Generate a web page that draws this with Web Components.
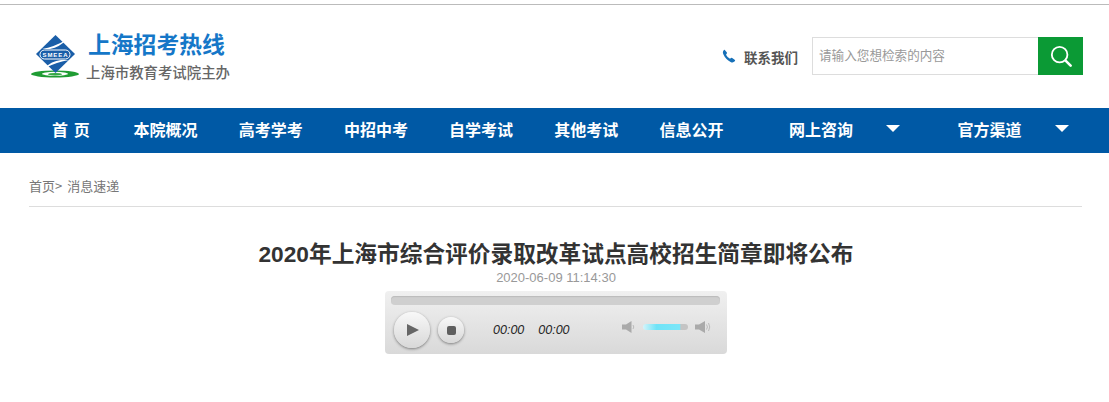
<!DOCTYPE html>
<html lang="zh">
<head>
<meta charset="utf-8">
<title>上海招考热线</title>
<style>
html, body { margin: 0; padding: 0; background: #fff; }
body { font-family: "Liberation Sans", "Noto Sans CJK SC", sans-serif; overflow: hidden; }
</style>
</head>
<body>
<site-header></site-header>
<main-nav>
    <nav-item>首 页</nav-item>
    <nav-item>本院概况</nav-item>
    <nav-item>高考学考</nav-item>
    <nav-item>中招中考</nav-item>
    <nav-item>自学考试</nav-item>
    <nav-item>其他考试</nav-item>
    <nav-item>信息公开</nav-item>
    <nav-item drop>网上咨询</nav-item>
    <nav-item drop>官方渠道</nav-item>
</main-nav>
<bread-crumb></bread-crumb>
<news-article>
    <span slot="title">2020年上海市综合评价录取改革试点高校招生简章即将公布</span>
    <span slot="date">2020-06-09 11:14:30</span>
    <audio-player></audio-player>
</news-article>

<script>
var h_template = document.createElement("template");
h_template.innerHTML = `
<style>
:host { display: block; box-sizing: border-box; border-top: 1px solid #bbb; margin-top: 4px; height: 104px; }
#wrap { display: flex; align-items: flex-start; padding: 0 26px 0 30px; }
#logo { display: flex; margin-top: 24px; }
#mark { width: 49px; height: 46px; margin-top: 4px; }
#names { margin-left: 9px; }
#name { font: bold 22.8px/28px "Liberation Sans", "Noto Sans CJK SC", sans-serif; color: #1577c8; margin-top: 2px; }
#sub { font: 500 14.4px/18px "Noto Sans CJK SC", sans-serif; color: #666; margin-top: 4px; margin-left: -2px; }
#right { margin-left: auto; display: flex; align-items: center; margin-top: 32px; }
#contact { display: flex; align-items: center; font: bold 13.5px/16px "Noto Sans CJK SC", sans-serif; color: #555; margin-right: 14px; margin-top: 1px; }
#contact svg { margin-right: 8px; margin-top: -2px; }
#search { display: flex; width: 271px; height: 38px; }
#field { flex: 1; box-sizing: border-box; border: 1px solid #ddd; border-right: none; font: 12.6px/34px "Noto Sans CJK SC", sans-serif; color: #999; padding-left: 6px; }
#btn { width: 45px; background: #0b9a35; display: flex; align-items: center; justify-content: center; }
</style>
<div id="wrap">
    <div id="logo">
        <svg id="mark" viewBox="0 0 49 46">
            <ellipse cx="25" cy="41" rx="24" ry="3.4" fill="#1f9c33"/>
            <ellipse cx="25" cy="40.8" rx="13" ry="2" fill="#fff"/>
            <ellipse cx="25" cy="41.2" rx="7" ry="1.3" fill="#35a845"/>
            <path d="M25.5 2 L45 21 L25.5 40 L6 21 Z" fill="#1a5ea8"/>
            <path d="M12 16 Q24 14 36 7 Q30 14 20 16" fill="#fff"/>
            <path d="M39 27 Q27 29 15 35 Q21 28 31 27" fill="#fff"/>
            <rect x="10" y="17" width="30" height="9" rx="4.5" fill="#1a5ea8" stroke="#fff" stroke-width="1"/>
            <text x="25" y="24" font-family="Liberation Sans" font-size="6" font-weight="bold" fill="#fff" text-anchor="middle" textLength="25">SMEEA</text>
        </svg>
        <div id="names">
            <div id="name">上海招考热线</div>
            <div id="sub">上海市教育考试院主办</div>
        </div>
    </div>
    <div id="right">
        <div id="contact">
            <svg width="14" height="14" viewBox="0 0 14 14"><path d="M2.6 .8 L4.9 3.6 Q5.2 4.2 4.7 4.8 L4 5.7 Q5.4 8.4 8 9.8 L9 9 Q9.6 8.6 10.2 9 L13 11 Q13.4 11.6 12.8 12.2 L11.6 13.1 Q10.4 13.8 8.6 12.9 Q3.6 10.4 1.2 5 Q.5 3.2 1.2 2 L2 .9 Q2.3 .6 2.6 .8 Z" fill="#1670b8"/></svg>
            联系我们
        </div>
        <div id="search">
            <div id="field">请输入您想检索的内容</div>
            <div id="btn">
                <svg width="22" height="22" viewBox="0 0 24 24" fill="none" stroke="#fff" stroke-width="2"><circle cx="10.5" cy="10.5" r="8.5"/><path d="M17 17 L22.5 22.5" stroke-width="2.8" stroke-linecap="round"/></svg>
            </div>
        </div>
    </div>
</div>
`;
class SiteHeader extends HTMLElement {
    constructor(){
        super();
        this.attachShadow({mode:"open"});
        this.shadowRoot.appendChild(h_template.content.cloneNode(true));
    }
}
customElements.define("site-header", SiteHeader);

class MainNav extends HTMLElement {
    constructor(){
        super();
        this.attachShadow({mode:"open"});
        this.shadowRoot.innerHTML = `
<style>
:host { display: flex; height: 45px; background: #0059a5; padding-left: 52px; align-items: center; gap: 41.2px; }
::slotted(nav-item:first-child) { width: 40.3px; word-spacing: 2px; }
::slotted(nav-item:nth-child(8)) { margin-left: 24.3px; }
::slotted(nav-item:nth-child(9)) { margin-left: 16.3px; }
</style>
<slot></slot>`;
    }
}
customElements.define("main-nav", MainNav);

class NavItem extends HTMLElement {
    constructor(){
        super();
        this.attachShadow({mode:"open"});
        this.shadowRoot.innerHTML = `
<style>
:host { display: flex; align-items: center; font: bold 16px/20px "Noto Sans CJK SC", sans-serif; color: #fff; white-space: pre; margin-top: -3px; }
#arrow { display: none; width: 0; height: 0; margin-left: 33px; border-left: 7px solid transparent; border-right: 7px solid transparent; border-top: 7px solid #fff; margin-top: -2px; }
:host([drop]) #arrow { display: block; }
</style>
<slot></slot><span id="arrow"></span>`;
    }
}
customElements.define("nav-item", NavItem);

class BreadCrumb extends HTMLElement {
    constructor(){
        super();
        this.attachShadow({mode:"open"});
        this.shadowRoot.innerHTML = `
<style>
:host { display: block; margin: 0 27px 0 29px; height: 54px; box-sizing: border-box; border-bottom: 1px solid #ddd; padding-top: 24px; font: 13px/18px "Noto Sans CJK SC", sans-serif; color: #777; word-spacing: 2px; }
</style>
首页&gt; 消息速递`;
    }
}
customElements.define("bread-crumb", BreadCrumb);

class NewsArticle extends HTMLElement {
    constructor(){
        super();
        this.attachShadow({mode:"open"});
        this.shadowRoot.innerHTML = `
<style>
:host { display: flex; flex-direction: column; align-items: center; padding: 31px 0 0 3px; }
#title { font: bold 22.7px/32px "Liberation Sans", "Noto Sans CJK SC", sans-serif; color: #333; white-space: nowrap; }
#date { font: 13px/16px "Liberation Sans", sans-serif; color: #999; }
</style>
<div id="title"><slot name="title"></slot></div>
<div id="date"><slot name="date"></slot></div>
<slot></slot>`;
    }
}
customElements.define("news-article", NewsArticle);

var p_template = document.createElement("template");
p_template.innerHTML = `
<style>
:host { display: block; width: 342px; height: 63px; box-sizing: border-box; margin-top: 5px; padding: 5px 7px 0 6px; border-radius: 4px; background: linear-gradient(#f0f0f0, #d9d9d9); }
#track { height: 9px; border-radius: 4px; background: #cfcfcf; box-shadow: inset 0 1px 1px #bbb; }
#controls { display: flex; align-items: center; margin-top: 7px; padding-left: 3px; }
.btn { border-radius: 50%; background: linear-gradient(#f8f8f8, #d8d8d8); box-shadow: 0 1px 3px rgba(0,0,0,.45); display: flex; align-items: center; justify-content: center; flex: none; }
#play { width: 36px; height: 36px; }
#play i { width: 0; height: 0; margin-left: 2px; border-left: 12px solid #666; border-top: 6.5px solid transparent; border-bottom: 6.5px solid transparent; }
#stop { width: 26px; height: 26px; margin-left: 8px; }
#stop i { width: 9px; height: 9px; border-radius: 2px; background: #5f5f5f; }
.time { font: italic 12.5px/16px "Liberation Sans", sans-serif; color: #222; margin-top: -1px; }
#cur { margin-left: 29px; }
#dur { margin-left: 14px; }
#vol { display: flex; align-items: center; margin-left: 52px; margin-top: -6px; }
#bar { width: 45px; height: 6px; margin: 0 7px 0 6px; border-radius: 3px; background: linear-gradient(90deg, #d4f4fa, #6fe3f7 30%, #7be6f8 82%, #c4c4c4 84%); }
</style>
<div id="track"></div>
<div id="controls">
    <div id="play" class="btn"><i></i></div>
    <div id="stop" class="btn"><i></i></div>
    <span id="cur" class="time">00:00</span>
    <span id="dur" class="time">00:00</span>
    <div id="vol">
        <svg width="15" height="14" viewBox="0 0 15 14"><path d="M0 4.5 H4 L9.5 1 V13 L4 9.5 H0 Z" fill="#aaa"/><path d="M11 5 Q12.6 7 11 9" fill="none" stroke="#bbb"/></svg>
        <div id="bar"></div>
        <svg width="17" height="14" viewBox="0 0 17 14"><path d="M0 4.5 H4 L10 1 V13 L4 9.5 H0 Z" fill="#aaa"/><path d="M11.5 4.5 Q13.4 7 11.5 9.5 M13.5 3 Q16 7 13.5 11" fill="none" stroke="#bbb"/></svg>
    </div>
</div>
`;
class AudioPlayer extends HTMLElement {
    constructor(){
        super();
        this.attachShadow({mode:"open"});
        this.shadowRoot.appendChild(p_template.content.cloneNode(true));
    }
}
customElements.define("audio-player", AudioPlayer);
</script>
</body>
</html>
